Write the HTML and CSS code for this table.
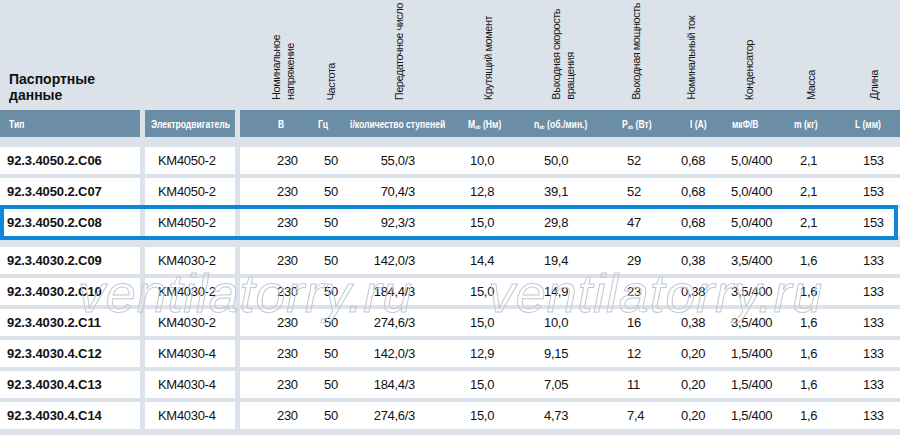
FILE: index.html
```html
<!DOCTYPE html>
<html lang="ru">
<head>
<meta charset="utf-8">
<title>Паспортные данные</title>
<link rel="stylesheet" href="styles.css">
</head>
<body>
<div class="sheet">
  <div class="grid top">
    <div class="title">Паспортные<br>данные</div>
    <div class="m"></div>
    <div class="k1"><div class="vl">Номинальное<br>напряжение</div></div>
    <div class="k2"><div class="vl">Частота</div></div>
    <div class="k3"><div class="vl">Передаточное число</div></div>
    <div class="k4"><div class="vl">Крутящий момент</div></div>
    <div class="k5"><div class="vl">Выходная скорость<br>вращения</div></div>
    <div class="k6"><div class="vl">Выходная мощность</div></div>
    <div class="k7"><div class="vl">Номинальный ток</div></div>
    <div class="k8"><div class="vl">Конденсатор</div></div>
    <div class="k9"><div class="vl">Масса</div></div>
    <div class="k10"><div class="vl">Длина</div></div>
  </div>

  <div class="grid hdr">
    <div class="t"><span class="lb">Тип</span></div>
    <div class="m"><span class="lb">Электродвигатель</span></div>
    <div class="k1"><span class="lb">В</span></div>
    <div class="k2"><span class="lb">Гц</span></div>
    <div class="k3"><span class="lb">i/количество ступеней</span></div>
    <div class="k4"><span class="lb">M<sub>ab</sub> (Нм)</span></div>
    <div class="k5"><span class="lb">n<sub>ab</sub> (об./мин.)</span></div>
    <div class="k6"><span class="lb">P<sub>ab</sub> (Вт)</span></div>
    <div class="k7"><span class="lb">I (A)</span></div>
    <div class="k8"><span class="lb">мкФ/В</span></div>
    <div class="k9"><span class="lb">m (кг)</span></div>
    <div class="k10"><span class="lb">L (мм)</span></div>
  </div>

  <div class="rows">
    <div class="grid row"><div class="t">92.3.4050.2.C06</div><div class="m">KM4050-2</div><div class="k1">230</div><div class="k2">50</div><div class="k3">55,0/3</div><div class="k4">10,0</div><div class="k5">50,0</div><div class="k6">52</div><div class="k7">0,68</div><div class="k8">5,0/400</div><div class="k9">2,1</div><div class="k10">153</div></div>
    <div class="grid row"><div class="t">92.3.4050.2.C07</div><div class="m">KM4050-2</div><div class="k1">230</div><div class="k2">50</div><div class="k3">70,4/3</div><div class="k4">12,8</div><div class="k5">39,1</div><div class="k6">52</div><div class="k7">0,68</div><div class="k8">5,0/400</div><div class="k9">2,1</div><div class="k10">153</div></div>
    <div class="grid row sel"><div class="t">92.3.4050.2.C08</div><div class="m">KM4050-2</div><div class="k1">230</div><div class="k2">50</div><div class="k3">92,3/3</div><div class="k4">15,0</div><div class="k5">29,8</div><div class="k6">47</div><div class="k7">0,68</div><div class="k8">5,0/400</div><div class="k9">2,1</div><div class="k10">153</div></div>
    <div class="grid row"><div class="t">92.3.4030.2.C09</div><div class="m">KM4030-2</div><div class="k1">230</div><div class="k2">50</div><div class="k3">142,0/3</div><div class="k4">14,4</div><div class="k5">19,4</div><div class="k6">29</div><div class="k7">0,38</div><div class="k8">3,5/400</div><div class="k9">1,6</div><div class="k10">133</div></div>
    <div class="grid row"><div class="t">92.3.4030.2.C10</div><div class="m">KM4030-2</div><div class="k1">230</div><div class="k2">50</div><div class="k3">184,4/3</div><div class="k4">15,0</div><div class="k5">14,9</div><div class="k6">23</div><div class="k7">0,38</div><div class="k8">3,5/400</div><div class="k9">1,6</div><div class="k10">133</div></div>
    <div class="grid row"><div class="t">92.3.4030.2.C11</div><div class="m">KM4030-2</div><div class="k1">230</div><div class="k2">50</div><div class="k3">274,6/3</div><div class="k4">15,0</div><div class="k5">10,0</div><div class="k6">16</div><div class="k7">0,38</div><div class="k8">3,5/400</div><div class="k9">1,6</div><div class="k10">133</div></div>
    <div class="grid row"><div class="t">92.3.4030.4.C12</div><div class="m">KM4030-4</div><div class="k1">230</div><div class="k2">50</div><div class="k3">142,0/3</div><div class="k4">12,9</div><div class="k5">9,15</div><div class="k6">12</div><div class="k7">0,20</div><div class="k8">1,5/400</div><div class="k9">1,6</div><div class="k10">133</div></div>
    <div class="grid row"><div class="t">92.3.4030.4.C13</div><div class="m">KM4030-4</div><div class="k1">230</div><div class="k2">50</div><div class="k3">184,4/3</div><div class="k4">15,0</div><div class="k5">7,05</div><div class="k6">11</div><div class="k7">0,20</div><div class="k8">1,5/400</div><div class="k9">1,6</div><div class="k10">133</div></div>
    <div class="grid row"><div class="t">92.3.4030.4.C14</div><div class="m">KM4030-4</div><div class="k1">230</div><div class="k2">50</div><div class="k3">274,6/3</div><div class="k4">15,0</div><div class="k5">4,73</div><div class="k6">7,4</div><div class="k7">0,20</div><div class="k8">1,5/400</div><div class="k9">1,6</div><div class="k10">133</div></div>

    <div class="wm wm-a">ventilatorry.ru</div>
    <div class="wm wm-b">ventilatorry.ru</div>
  </div>
</div>
</body>
</html>
```

FILE: styles.css
```css
html, body {
  margin: 0;
  padding: 0;
}
body {
  background: #dbe2e9;
  color: #111;
  font-family: "Liberation Sans", Arial, sans-serif;
}
.sheet {
  width: 900px;
}
.grid {
  display: grid;
  grid-template-columns: 140px 95px 75px 35px 115px 70px 75px 65px 55px 60px 60px 55px;
}
.m, .k1 {
  margin-left: 5px;
}

/* column offsets: --h header label, --d data, --r rotated label */
.k1 { --h: 38px; --d: 37px; --r: 29px; }
.k2 { --h: 8px; --d: 14px; --r: 14px; }
.k3 { --h: 5px; --d: 0px; --r: 47px; }
.k4 { --h: 8px; --d: 10px; --r: 21px; }
.k5 { --h: 4px; --d: 14px; --r: 19px; }
.k6 { --h: 17px; --d: 22px; --r: 24px; }
.k7 { --h: 20px; --d: 11px; --r: 14px; }
.k8 { --h: 7px; --d: 6px; --r: 17px; }
.k9 { --h: 9px; --d: 15px; --r: 19px; }
.k10 { --h: 10px; --d: 18px; --r: 22px; }

/* top band with vertical labels */
.top {
  height: 110px;
  align-items: end;
}
.title {
  font-weight: bold;
  font-size: 14px;
  line-height: 16px;
  padding: 0 0 7px 9px;
}
.top > div[class^="k"] {
  padding-left: var(--r);
  padding-bottom: 10px;
}
.vl {
  writing-mode: vertical-rl;
  transform: rotate(180deg);
  font-size: 11px;
  line-height: 14px;
  letter-spacing: -0.5px;
  white-space: nowrap;
  color: #1a1a1a;
}

/* blue header row */
.hdr {
  height: 27px;
  margin-bottom: 10px;
}
.hdr > div {
  background: #6b8ea6;
  color: #fff;
  font-weight: bold;
  font-size: 11px;
  display: flex;
  align-items: center;
  white-space: nowrap;
  overflow: hidden;
  padding-left: var(--h);
}
.hdr .t { padding-left: 9px; }
.hdr .m { padding-left: 6px; }
.lb {
  display: inline-block;
  transform: scaleX(0.78);
  transform-origin: left center;
}
.hdr sub {
  font-size: 6px;
  vertical-align: -1px;
}

/* data rows */
.rows {
  display: flex;
  flex-direction: column;
  gap: 4px;
  position: relative;
}
.row {
  height: 27px;
}
.row > div {
  background: #fff;
  display: flex;
  align-items: center;
  font-size: 13px;
  letter-spacing: -0.3px;
  white-space: nowrap;
  padding-left: var(--d);
}
.row .t {
  font-weight: bold;
  padding-left: 7px;
  letter-spacing: -0.1px;
}
.row .m { padding-left: 13px; }
.row .k3 {
  justify-content: flex-end;
  padding-right: 45px;
}
.row.sel {
  position: relative;
  margin-bottom: 7px;
}
.row.sel::after {
  content: "";
  position: absolute;
  top: -4px;
  bottom: -4px;
  left: 0;
  right: 2px;
  border: 4px solid #0a89d9;
  pointer-events: none;
}

/* watermark overlay */
.wm {
  position: absolute;
  top: 119px;
  font-family: "Liberation Sans", Arial, sans-serif;
  font-style: italic;
  font-size: 54px;
  line-height: 1;
  letter-spacing: 0.8px;
  color: transparent;
  -webkit-text-stroke: 1px #c3c8cd;
  pointer-events: none;
  white-space: nowrap;
}
.wm-a { left: 78px; }
.wm-b { left: 488px; }
```
